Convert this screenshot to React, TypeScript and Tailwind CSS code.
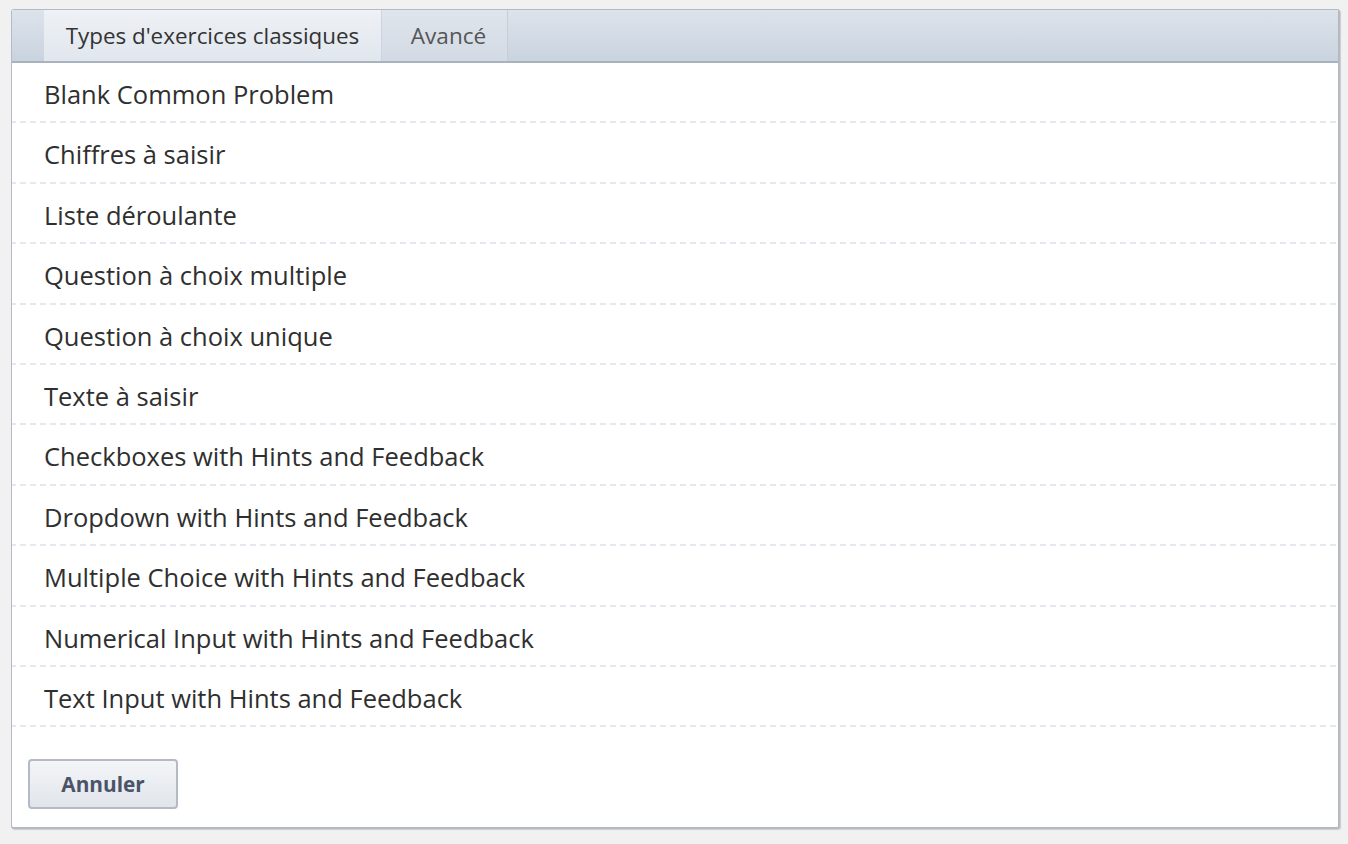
const items = [
  "Blank Common Problem",
  "Chiffres à saisir",
  "Liste déroulante",
  "Question à choix multiple",
  "Question à choix unique",
  "Texte à saisir",
  "Checkboxes with Hints and Feedback",
  "Dropdown with Hints and Feedback",
  "Multiple Choice with Hints and Feedback",
  "Numerical Input with Hints and Feedback",
  "Text Input with Hints and Feedback",
];

const App = () => {
  return (
    <div className="min-h-[844px] w-full bg-[#f1f1f1] pt-[9px] pl-[11px] pr-[8px] font-['Open_Sans',sans-serif]">
      <div className="h-[820px] w-[1329px] rounded-[3px] border border-[#b4b9c4] border-r-2 border-b-2 bg-white shadow-[1px_1px_1px_rgba(0,0,0,0.15)] flex flex-col">
        {/* Tabs */}
        <div className="flex h-[53px] shrink-0 border-b-2 border-[#aab2be] bg-gradient-to-b from-[#dde3eb] to-[#c9d3df] pl-[32px]">
          <button className="h-full w-[338px] bg-gradient-to-b from-[#eef1f5] to-[#e1e7ee] text-[22.4px] text-[#333] border-r border-[#cdd4de]">
            Types d'exercices classiques
          </button>
          <button className="h-full w-[126px] pl-[8px] bg-gradient-to-b from-[#dfe5ec] to-[#d2dae5] text-[22.6px] text-[#555] border-r border-[#c5ced9]">
            Avancé
          </button>
        </div>

        {/* Items */}
        <ul>
          {items.map((it) => (
            <li
              key={it}
              className="h-[60.4px] flex items-center pl-[32px] pt-[2px] text-[25.5px] text-[#2f2f2f] bg-[linear-gradient(to_right,#e5e8ee_6px,transparent_6px)] bg-[length:10px_2px] bg-repeat-x bg-bottom"
            >
              {it}
            </li>
          ))}
        </ul>

        <div className="pl-[16px] pt-[32px]">
          <button className="w-[150px] h-[50px] rounded-[4px] border-2 border-[#b3bac6] bg-gradient-to-b from-[#f3f5f8] to-[#e1e5eb] text-[20.8px] font-bold text-[#4a5468]">
            Annuler
          </button>
        </div>
      </div>
    </div>
  );
};

export default App;
